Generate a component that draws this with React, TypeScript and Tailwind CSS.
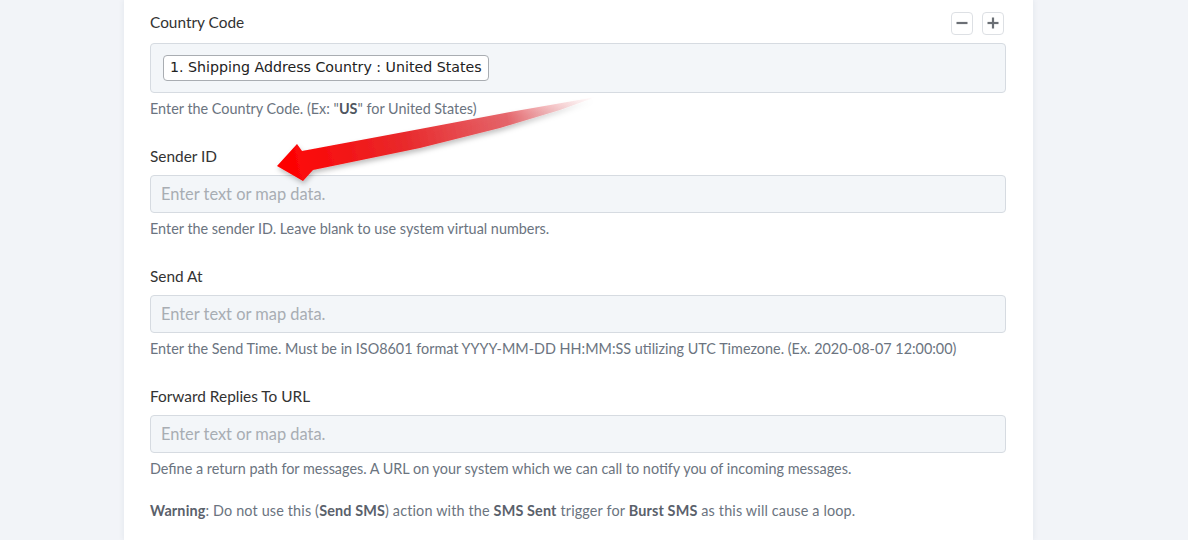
import type { ReactNode } from 'react';

const font = { fontFamily: 'Lato, "Open Sans", "Liberation Sans", sans-serif' };

function StepButton({ kind }: { kind: 'minus' | 'plus' }) {
  return (
    <button className="flex h-[23px] w-[22px] items-center justify-center rounded-[4px] border border-[#dde0e4] bg-white">
      <svg width="12" height="12" viewBox="0 0 12 12" stroke="#6b6f75" strokeWidth="2.2" strokeLinecap="butt">
        <line x1="0.5" y1="6" x2="11.5" y2="6" />
        {kind === 'plus' && <line x1="6" y1="0.5" x2="6" y2="11.5" />}
      </svg>
    </button>
  );
}

function Field({
  label,
  help,
}: {
  label: string;
  help: ReactNode;
}) {
  return (
    <div className="mt-[27px]">
      <label className="block text-[15.4px] leading-5 text-[#333]">{label}</label>
      <div className="mt-[9px] flex h-[38px] items-center rounded-[4px] border border-[#d6dbe1] bg-[#f3f6f9] px-[10px]">
        <span className="text-[16.4px] text-[#a8adb3]">Enter text or map data.</span>
      </div>
      <p className="mt-[6px] text-[14.4px] leading-5 text-[#6b7480]">{help}</p>
    </div>
  );
}

function Arrow() {
  return (
    <svg className="pointer-events-none absolute left-0 top-0" width="1188" height="540">
      <defs>
        <linearGradient id="arrowFill" x1="278" y1="166" x2="596" y2="97" gradientUnits="userSpaceOnUse">
          <stop offset="0" stopColor="#ff0000" />
          <stop offset="0.4" stopColor="#e82a2c" />
          <stop offset="0.72" stopColor="#e4585e" stopOpacity="0.9" />
          <stop offset="1" stopColor="#f2a8ad" stopOpacity="0" />
        </linearGradient>
        <filter id="arrowShadow" x="-10%" y="-30%" width="120%" height="160%">
          <feDropShadow dx="1" dy="3" stdDeviation="2.5" floodColor="#000" floodOpacity="0.25" />
        </filter>
      </defs>
      <polygon
        points="277,166 297,144 302,151 420,129 510,112 596,97 560,110 500,128 420,148 313,170 303,181"
        fill="url(#arrowFill)"
        filter="url(#arrowShadow)"
      />
    </svg>
  );
}

export default function App() {
  return (
    <div className="relative h-[540px] w-[1188px] overflow-hidden bg-[#f2f4f8]" style={font}>
      <div className="ml-[124px] h-full w-[909px] bg-white px-[26px] pr-[27px] pt-[10px] shadow-[0_0_6px_rgba(40,60,90,0.08)]">
        {/* Country code field with mapped token */}
        <div>
          <div className="flex h-6 items-center justify-between">
            <label className="text-[15.4px] leading-5 text-[#333]">Country Code</label>
            <div className="mr-[2px] mt-[2px] flex gap-[9px]">
              <StepButton kind="minus" />
              <StepButton kind="plus" />
            </div>
          </div>
          <div className="mt-[9px] flex h-[50px] items-center rounded-[4px] border border-[#d6dbe1] bg-[#f3f6f9] px-3">
            <span
              className="flex h-[26px] items-center rounded-[4px] border border-[#a9adb2] bg-white px-[6px] text-[14.2px] text-[#222]"
              style={{ fontFamily: '"DejaVu Sans", Verdana, sans-serif' }}
            >
              1. Shipping Address Country : United States
            </span>
          </div>
          <p className="mt-[6px] text-[14.4px] leading-5 text-[#6b7480]">
            Enter the Country Code. (Ex: "<b className="text-[#4f5660]">US</b>" for United States)
          </p>
        </div>

        <Field label="Sender ID" help="Enter the sender ID. Leave blank to use system virtual numbers." />
        <Field
          label="Send At"
          help="Enter the Send Time. Must be in ISO8601 format YYYY-MM-DD HH:MM:SS utilizing UTC Timezone. (Ex. 2020-08-07 12:00:00)"
        />
        <Field
          label="Forward Replies To URL"
          help="Define a return path for messages. A URL on your system which we can call to notify you of incoming messages."
        />

        <p className="mt-[22px] text-[14.4px] leading-5 tracking-[0.15px] text-[#6b7480]">
          <b className="text-[#5a616b]">Warning</b>: Do not use this (<b className="text-[#5a616b]">Send SMS</b>) action
          with the <b className="text-[#5a616b]">SMS Sent</b> trigger for <b className="text-[#5a616b]">Burst SMS</b> as
          this will cause a loop.
        </p>
      </div>
      <Arrow />
    </div>
  );
}
